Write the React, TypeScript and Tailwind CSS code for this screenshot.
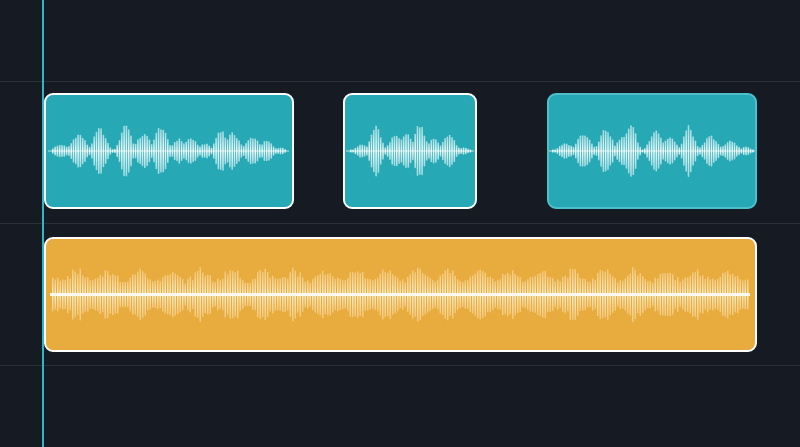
import React from "react";

type Burst = [number, number, number];

function rnd(i: number, seed: number) {
  const x = Math.sin(i * 12.9898 + seed * 78.233) * 43758.5453;
  return x - Math.floor(x);
}

function TealWave({ w, h, x0, x1, bursts, seed }: { w: number; h: number; x0: number; x1: number; bursts: Burst[]; seed: number }) {
  const cy = h / 2;
  const bars: React.ReactNode[] = [];
  let i = 0;
  const gid = `tg${seed}`;
  for (let x = x0; x <= x1; x += 2.3, i++) {
    let a = 2;
    for (const [c, amp, sw] of bursts) {
      const v = amp * Math.exp(-Math.pow((x - c) / sw, 2));
      a = Math.max(a, v);
    }
    const j = 0.82 + 0.18 * rnd(i, seed);
    const hh = Math.max(1.5, a * j);
    bars.push(<rect key={i} x={x} y={cy - hh} width={1.6} height={hh * 2} rx={0.7} fill={`url(#${gid})`} />);
  }
  return (
    <svg width={w - 4} height={h - 4} viewBox={`2 2 ${w - 4} ${h - 4}`} className="block">
      <defs>
        <linearGradient id={gid} x1="0" y1="0" x2="0" y2="1">
          <stop offset="0" stopColor="#eafafa" stopOpacity="0.6" />
          <stop offset="0.5" stopColor="#f2fcfc" stopOpacity="1" />
          <stop offset="1" stopColor="#eafafa" stopOpacity="0.6" />
        </linearGradient>
      </defs>
      <line x1={x0 - 4} x2={x1 + 4} y1={cy} y2={cy} stroke="#e6f8f9" strokeWidth={1} opacity={0.8} />
      {bars}
    </svg>
  );
}

function OrangeWave({ w, h, x0, x1 }: { w: number; h: number; x0: number; x1: number }) {
  const cy = h / 2;
  const bars: React.ReactNode[] = [];
  let i = 0;
  for (let x = x0 + 2; x <= x1 - 2; x += 2.5, i++) {
    const env = 0.5 + 0.5 * Math.sin((x * 2 * Math.PI) / 31 + 1.3);
    const a = 11 + 13 * env * (0.55 + 0.45 * rnd(i, 3)) + 5 * rnd(i, 7);
    bars.push(<rect key={i} x={x} y={cy - a} width={1.5} height={a * 2} fill="url(#og)" />);
  }
  return (
    <svg width={w - 4} height={h - 4} viewBox={`2 2 ${w - 4} ${h - 4}`} className="block">
      <defs>
        <linearGradient id="og" x1="0" y1="0" x2="0" y2="1">
          <stop offset="0" stopColor="#fbe3b2" stopOpacity="0.5" />
          <stop offset="0.5" stopColor="#fff0cf" stopOpacity="1" />
          <stop offset="1" stopColor="#fbe3b2" stopOpacity="0.5" />
        </linearGradient>
      </defs>
      {bars}
      <rect x={x0} y={cy - 1.5} width={x1 - x0} height={3} fill="#fffaf0" />
    </svg>
  );
}

export default function App() {
  return (
    <div className="relative w-[800px] h-[447px] overflow-hidden bg-[#161a23] flex flex-col">
      <div className="h-[81px]" />
      <div className="h-px bg-[#2b2f39]" />
      <div className="h-[141px] flex items-start pl-[44px] pt-[11px]">
        <div className="w-[250px] h-[116px] rounded-[9px] border-2 border-white bg-[#27a8b5] overflow-hidden">
          <TealWave w={250} h={116} x0={8} x1={241} seed={1}
            bursts={[[16, 7, 9], [34, 18, 9], [55, 24, 8], [81, 29, 7], [99, 18, 9], [116, 26, 8], [134, 13, 8], [146, 14, 8], [160, 8, 8], [176, 23, 7], [188, 19, 9], [208, 15, 9], [222, 11, 8], [236, 4, 6]]} />
        </div>
        <div className="ml-[49px] w-[134px] h-[116px] rounded-[9px] border-2 border-white bg-[#27a8b5] overflow-hidden">
          <TealWave w={134} h={116} x0={7} x1={127} seed={2}
            bursts={[[18, 7, 8], [32, 26, 7], [52, 17, 8], [62, 19, 8], [76, 29, 7], [90, 13, 8], [105, 18, 8], [120, 4, 6]]} />
        </div>
        <div className="ml-[70px] w-[210px] h-[116px] rounded-[9px] border-2 border-[#4cc1cc] bg-[#27a8b5] overflow-hidden">
          <TealWave w={210} h={116} x0={5} x1={206} seed={3}
            bursts={[[18, 8, 9], [36, 19, 9], [58, 24, 8], [75, 15, 8], [83, 29, 7], [108, 23, 8], [122, 15, 8], [141, 26, 7], [163, 16, 9], [183, 11, 9], [198, 5, 6]]} />
        </div>
      </div>
      <div className="h-px bg-[#2b2f39]" />
      <div className="h-[141px] flex items-start pl-[44px] pt-[13px]">
        <div className="w-[713px] h-[115px] rounded-[9px] border-2 border-white bg-[#e8ab3e] overflow-hidden">
          <OrangeWave w={713} h={115} x0={6} x1={706} />
        </div>
      </div>
      <div className="h-px bg-[#2b2f39]" />
      <div className="absolute top-0 bottom-0 left-[42px] w-[2px] bg-[#2fb7c5]" />
    </div>
  );
}
